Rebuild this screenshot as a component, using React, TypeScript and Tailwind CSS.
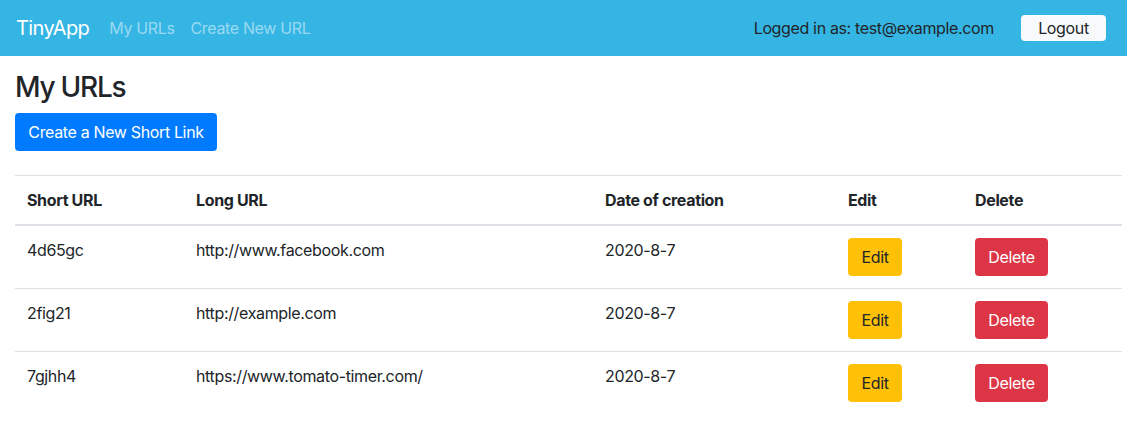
const URLS = [
  { short: "4d65gc", long: "http://www.facebook.com", date: "2020-8-7" },
  { short: "2fig21", long: "http://example.com", date: "2020-8-7" },
  { short: "7gjhh4", long: "https://www.tomato-timer.com/", date: "2020-8-7" },
];

const FONT = "font-['Inter','Liberation_Sans',sans-serif] tracking-[-0.022em]";

export default function App() {
  return (
    <div className={`${FONT} min-h-screen bg-white text-[16px] leading-6 text-[#212529]`}>
      {/* NAVBAR */}
      <nav className="flex h-14 items-center justify-between bg-[#34b5e4] pl-4 pr-[21px]">
        <div className="flex items-center">
          <a className="mr-3 text-[20px] leading-[30px] tracking-[-0.03em] text-white">TinyApp</a>
          <a className="px-2 text-[rgba(255,255,255,0.5)]">My URLs</a>
          <a className="px-2 text-[rgba(255,255,255,0.5)]">Create New URL</a>
        </div>
        <div className="flex items-center">
          <span className="mr-[27px] text-[#212529]">Logged in as: test@example.com</span>
          <button className="h-[26px] w-[85px] rounded bg-[#f8f9fa] leading-6 text-[#212529]">
            Logout
          </button>
        </div>
      </nav>

      {/* MAIN */}
      <main className="pl-[15px] pr-[5px]">
        <h3 className="mt-[15px] mb-2 text-[28px] leading-[1.2] font-medium tracking-[-0.045em]">
          My URLs
        </h3>
        <a className="inline-block w-[202px] rounded bg-[#007bff] py-[7px] text-center text-white">
          Create a New Short Link
        </a>

        <table className="mt-6 w-full border-collapse text-left">
          <thead>
            <tr className="border-t border-[#dee2e6]">
              <th className="w-[169px] border-b-2 border-[#dee2e6] p-3 font-bold">Short URL</th>
              <th className="w-[409px] border-b-2 border-[#dee2e6] p-3 font-bold">Long URL</th>
              <th className="w-[243px] border-b-2 border-[#dee2e6] p-3 font-bold">Date of creation</th>
              <th className="w-[127px] border-b-2 border-[#dee2e6] p-3 font-bold">Edit</th>
              <th className="border-b-2 border-[#dee2e6] p-3 font-bold">Delete</th>
            </tr>
          </thead>
          <tbody>
            {URLS.map((url, i) => (
              <tr key={url.short} className={i > 0 ? "border-t border-[#dee2e6]" : ""}>
                <td className="p-3 align-top">{url.short}</td>
                <td className="p-3 align-top">{url.long}</td>
                <td className="p-3 align-top">{url.date}</td>
                <td className="p-3 align-top">
                  <button className="h-[38px] w-[54px] rounded bg-[#ffc107] text-[#212529]">Edit</button>
                </td>
                <td className="p-3 align-top">
                  <button className="h-[38px] w-[73px] rounded bg-[#dc3545] text-white">Delete</button>
                </td>
              </tr>
            ))}
          </tbody>
        </table>
      </main>
    </div>
  );
}
